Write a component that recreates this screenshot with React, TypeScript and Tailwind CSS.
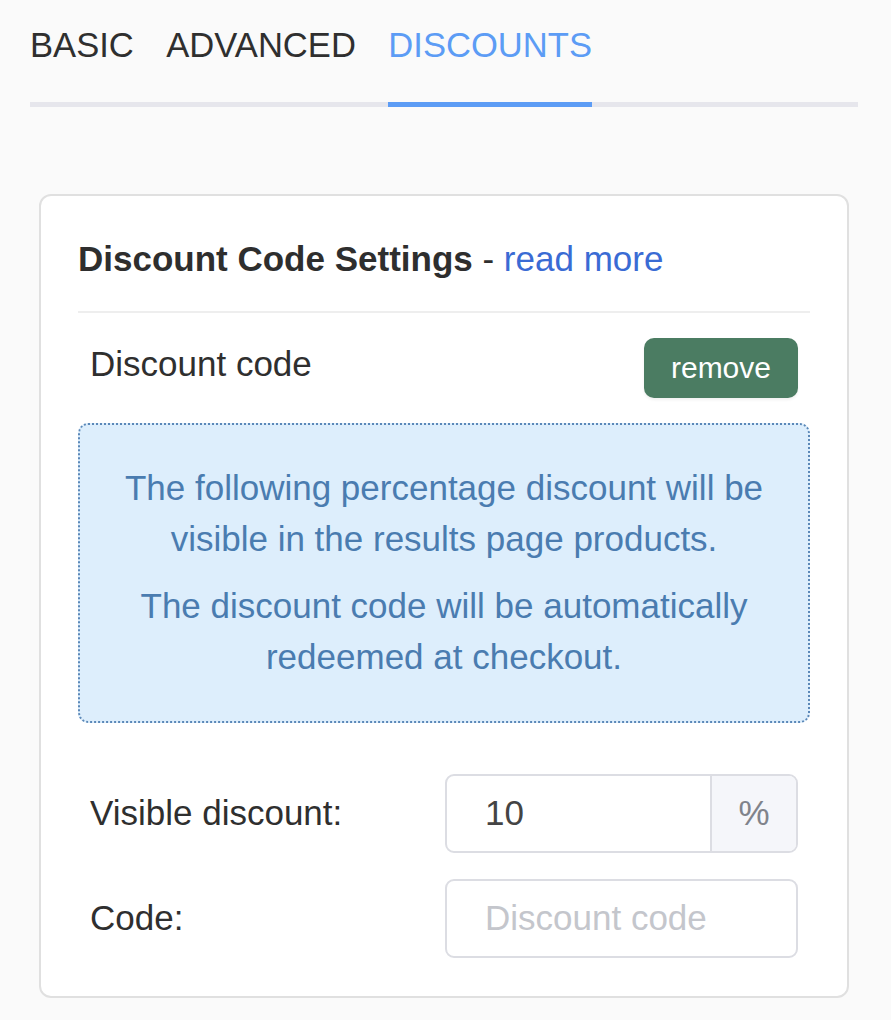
import React from "react";

export default function App() {
  const font = { fontFamily: '"Liberation Sans", Arial, sans-serif' };
  return (
    <div className="min-h-[1020px] bg-[#fafafa] pt-[25px]" style={font}>
      <div className="ml-[30px] w-[828px]">
        <div className="flex gap-[32.5px] border-b-[5px] border-[#e6e6ec] text-[34.6px] leading-[40px]">
          <div className="mb-[-5px] border-b-[5px] border-transparent pb-[37px] text-[#2f2f2f]">BASIC</div>
          <div className="mb-[-5px] border-b-[5px] border-transparent pb-[37px] text-[#2f2f2f]">ADVANCED</div>
          <div className="mb-[-5px] border-b-[5px] border-[#5c9cf5] pb-[37px] text-[#5c9cf5]">DISCOUNTS</div>
        </div>

        <div className="mx-[9px] mt-[87px] rounded-[12px] border-2 border-[#e0e0e0] bg-white px-[37px] pt-[37px] pb-[38px] text-[35px] leading-[51.5px] text-[#2f2f2f]">
          <div className="border-b-2 border-[#eeeeee] pb-[26px]">
            <span className="font-bold text-[#2e2e2e]">Discount Code Settings</span>
            <span> - </span>
            <span className="text-[#3a6bd4]">read more</span>
          </div>

          <div className="mt-[25px] flex items-start justify-between px-[12px]">
            <div>Discount code</div>
            <button className="flex h-[60px] items-center rounded-[10px] bg-[#4b7c62] px-[27px] text-[30px] leading-none text-white shadow-[0_2px_3px_rgba(0,0,0,0.06)]">
              remove
            </button>
          </div>

          <div className="mt-[25px] rounded-[10px] border-2 border-dotted border-[#5b88b8] bg-[#ddeefc] px-[40px] pt-[37px] pb-[38px] text-center text-[#4a7cb0]">
            <p>The following percentage discount will be visible in the results page products.</p>
            <p className="mt-[15px]">The discount code will be automatically redeemed at checkout.</p>
          </div>

          <div className="mt-[51px] flex items-center px-[12px]">
            <div className="w-[355px]">Visible discount:</div>
            <div className="flex h-[79px] flex-1 overflow-hidden rounded-[9px] border-2 border-[#dcdde3]">
              <div className="flex flex-1 items-center pl-[38px] text-[#444444]">10</div>
              <div className="flex w-[86px] items-center justify-center border-l-2 border-[#dcdde3] bg-[#f5f6fa] text-[#80838b]">%</div>
            </div>
          </div>

          <div className="mt-[26px] flex items-center px-[12px]">
            <div className="w-[355px]">Code:</div>
            <div className="flex h-[79px] flex-1 items-center rounded-[9px] border-2 border-[#dcdde3] pl-[38px] text-[#c4c6cc]">
              Discount code
            </div>
          </div>
        </div>
      </div>
    </div>
  );
}
